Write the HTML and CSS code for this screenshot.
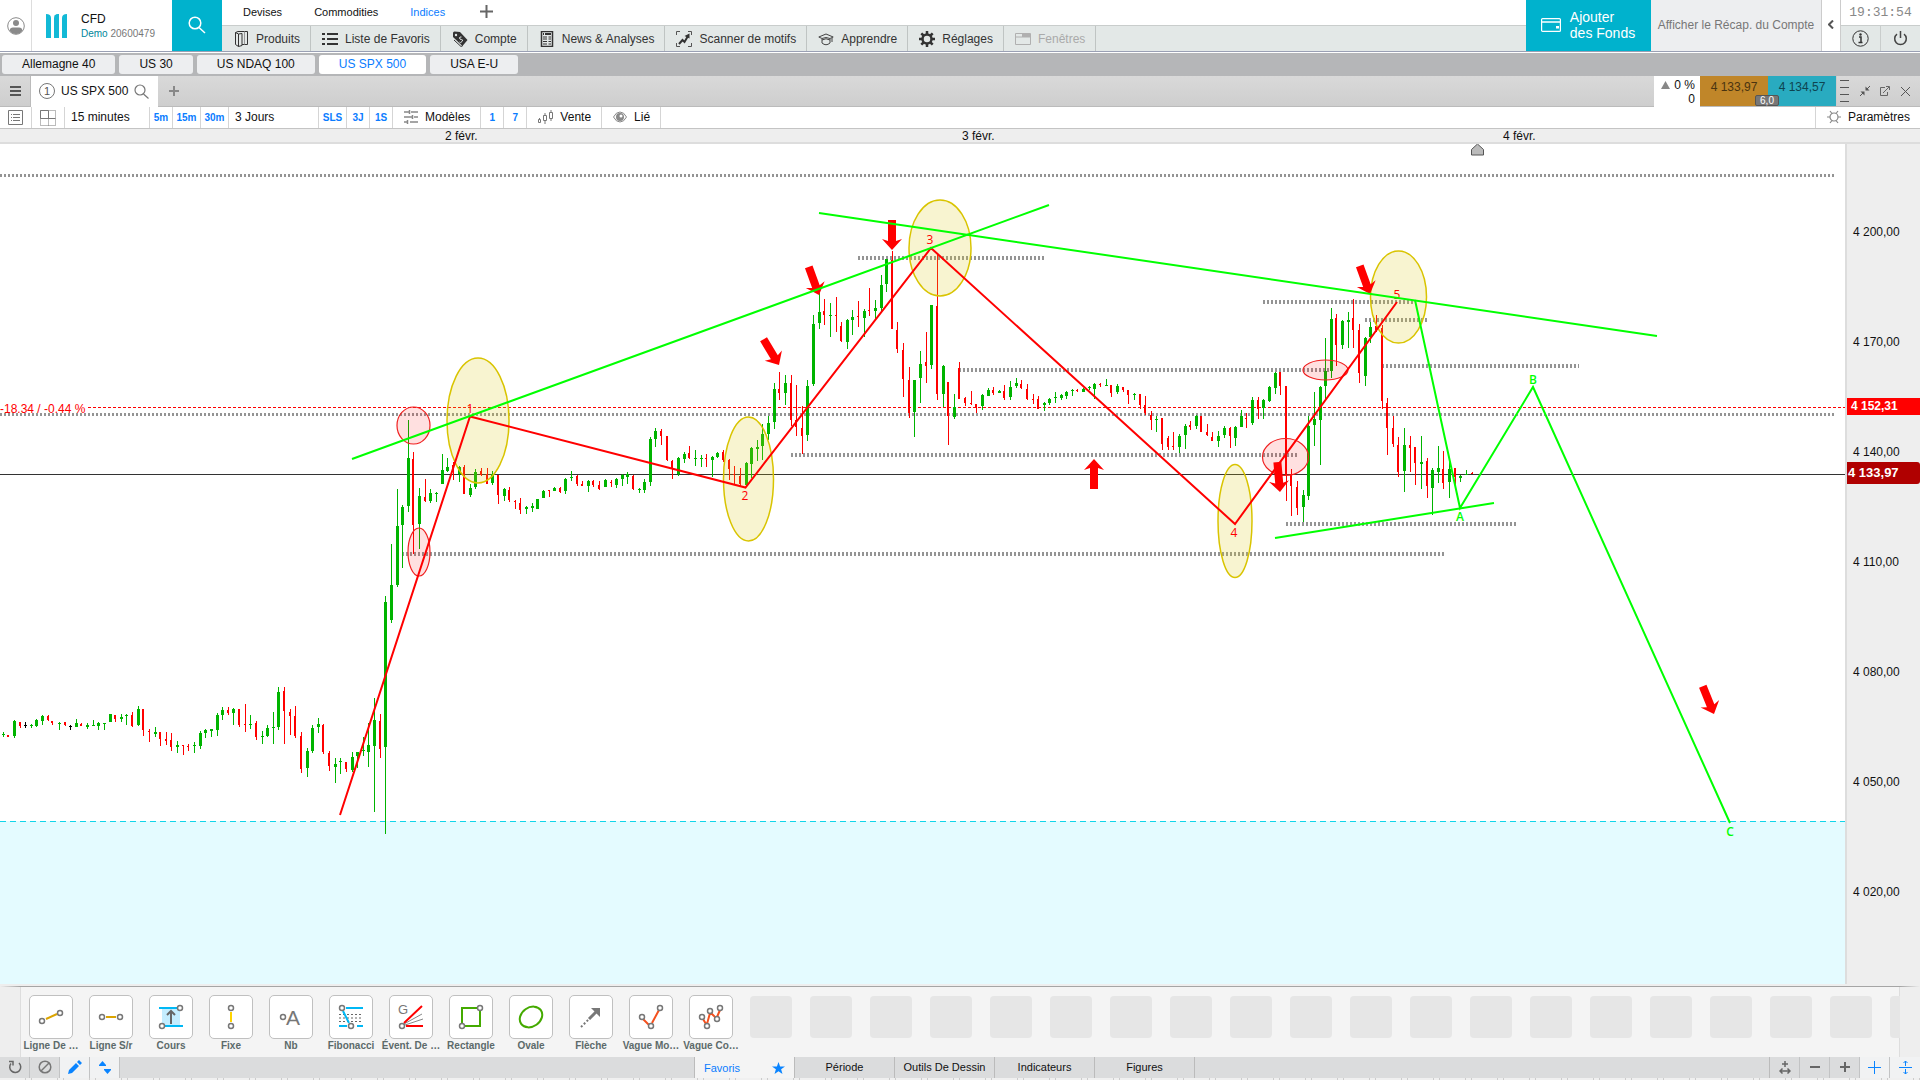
FILE: index.html
```html
<!DOCTYPE html>
<html lang="fr">
<head>
    <meta charset="UTF-8">
    <meta name="viewport" content="width=device-width, initial-scale=1.0">
    <title>US SPX 500 - CFD</title>
    <link rel="stylesheet" href="styles.css">
</head>
<body>

    <header class="header">
        <button class="user" aria-label="Profil">
            <svg width="18" height="22" viewBox="0 0 18 22"><circle cx="9" cy="11" r="8.3" fill="none" stroke="#8a8a8a"/><circle cx="9" cy="8" r="3" fill="#8a8a8a"/><path d="M2.5 15.500Q3 12.500 6 12.500h6q3 0 3.500 3Q13 19 9 19t-6.500-3.500z" fill="#8a8a8a"/></svg>
        </button>
        <div class="brand">
            <svg width="21" height="24" viewBox="0 0 21 24" fill="#12b9d6"><path d="M0 0Q5 0 5 4v20H0z"/><path d="M8 4q0-4 5-4v24H8z"/><path d="M16 4q0-4 5-4v24h-5z"/><path d="M8 2q2-2 5-2v3z"/></svg>
            <div class="account">
                <span class="account-name">CFD</span>
                <span class="account-id"><b>Demo</b> 20600479</span>
            </div>
        </div>
        <button class="search" aria-label="Rechercher">
            <svg width="18" height="18" viewBox="0 0 18 18" fill="none" stroke="#fff" stroke-width="1.500"><circle cx="7" cy="7" r="5.800"/><path d="M11 11.500l6 5.500"/></svg>
        </button>
        <div class="navs">
            <nav class="markets">
                <a href="#">Devises</a>
                <a href="#">Commodities</a>
                <a href="#" class="active">Indices</a>
                <button aria-label="Ajouter"><svg width="13" height="13" viewBox="0 0 13 13" stroke="#666" stroke-width="2"><path d="M6.500 0v13M0 6.500h13"/></svg></button>
            </nav>
            <nav class="menu">
                <button><svg class="ico" viewBox="0 0 16 16" fill="none" stroke="#333"><path d="M5 .5h9.500v13H9M2.500 1.500l3 1.500v12.500l-3-2zM5.500 3l3.500-.5v12l-3.500 1M5 .5L2.500 1.500"/><path d="M11.500.5v13" stroke="#999"/></svg>Produits</button>
                <button><svg class="ico" viewBox="0 0 16 16" stroke="#333" stroke-width="2"><path d="M0 3h3M0 8h3M0 13h3M5 3h11M5 8h11M5 13h11"/></svg>Liste de Favoris</button>
                <button><svg class="ico" viewBox="0 0 16 16"><path d="M1 2q0-1.500 1.500-1.500L8 1l7.500 8-5 6L1 6z" fill="#333"/><path d="M2 9l7 6.500 2-1" fill="none" stroke="#333"/><circle cx="4" cy="4" r="1.200" fill="#e3e8e7"/><path d="M9.500 6q-2-.5-2 1t2 1.500.5 2-2.500.5" fill="none" stroke="#e3e8e7"/></svg>Compte</button>
                <button><svg class="ico" viewBox="0 0 16 16" fill="none" stroke="#333"><rect x="2.500" y=".5" width="11" height="15" stroke-width="1.500"/><path d="M4 3h1M6 3h6" stroke-width="2"/><path d="M4 6h4M4 8h4M4 10.500h4M4 13h4M9.500 6H12M9.500 8H12M9.500 10.500H12M9.500 13H12"/></svg>News &amp; Analyses</button>
                <button><svg class="ico" viewBox="0 0 16 16" fill="none" stroke="#333"><path d="M.5 4V.5H4M12 .5h3.500V4M.5 12v3.500H4M12 15.500h3.500V12" stroke="#555"/><path d="M3 13l3.500-4 2 2L12 5" stroke-width="2"/><path d="M13.500 2.500v5L8.500 5z" fill="#333" stroke="none"/></svg>Scanner de motifs</button>
                <button><svg class="ico" viewBox="0 0 16 16" fill="none" stroke="#444"><path d="M.8 6L8 3l7.200 3L12 7.500Q8 5.500 4 7.500zM4 8v4q4 3.500 8 0V8M4 9q4-2.500 8 0M14 7v4"/></svg>Apprendre</button>
                <button><svg class="ico" viewBox="0 0 16 16" fill="none" stroke="#333"><circle cx="8" cy="8" r="4.500" stroke-width="2.500"/><path d="M8 0v3M8 13v3M0 8h3M13 8h3M2.300 2.300l2.200 2.200M11.500 11.500l2.200 2.200M2.300 13.700l2.200-2.200M11.500 4.500l2.200-2.200" stroke-width="2.500"/></svg>Réglages</button>
                <button disabled><svg class="ico" viewBox="0 0 16 16" fill="none" stroke="#b0b0b0"><path d="M.5 2.500h15v11H.5z"/><path d="M1 6h14"/><path d="M7 4.500h8" stroke-width="3"/></svg>Fenêtres</button>
            </nav>
        </div>
        <button class="funds">
            <svg width="20" height="14" viewBox="0 0 20 14" fill="none" stroke="#fff" stroke-width="1.200"><rect x=".6" y=".6" width="18.800" height="12.800" rx="1"/><path d="M1 4h18" stroke-width="1.500"/><rect x="15" y="8" width="3" height="2.500" fill="#fff" stroke="none"/></svg>
            <span>Ajouter<br>des Fonds</span>
        </button>
        <button class="summary">Afficher le Récap. du Compte</button>
        <button class="fold" aria-label="Replier"><svg width="6" height="9" viewBox="0 0 6 9" fill="none" stroke="#555" stroke-width="2"><path d="M5 .5l-4 4 4 4"/></svg></button>
        <div class="status">
            <time class="clock">19:31:54</time>
            <div class="status-buttons">
                <button aria-label="Informations"><svg width="17" height="17" viewBox="0 0 17 17"><circle cx="8.500" cy="8.500" r="7.700" fill="none" stroke="#333"/><path d="M7 7h2v5M6.500 12.500h4" stroke="#333" stroke-width="1.500" fill="none"/><circle cx="8.500" cy="4.500" r="1.200" fill="#333"/></svg></button>
                <button aria-label="Quitter"><svg width="15" height="15" viewBox="0 0 15 15" fill="none" stroke="#444" stroke-width="1.500"><path d="M4 3.200a5.800 5.800 0 1 0 7 0M7.500 0v7"/></svg></button>
            </div>
        </div>
    </header>

    <nav class="layouts">
        <button>Allemagne 40</button>
        <button>US 30</button>
        <button>US NDAQ 100</button>
        <button class="active">US SPX 500</button>
        <button>USA E-U</button>
    </nav>

    <div class="titlebar">
        <button class="burger" aria-label="Menu"><svg width="11" height="12" viewBox="0 0 11 12" stroke="#555" stroke-width="2"><path d="M0 2h11M0 6h11M0 10h11"/></svg></button>
        <div class="tab">
            <span class="num">1</span>
            <span>US SPX 500</span>
            <svg width="15" height="15" viewBox="0 0 15 15" fill="none" stroke="#777" stroke-width="1.200"><circle cx="6" cy="6" r="5"/><path d="M9.500 10l5 4.500"/></svg>
        </div>
        <button class="newtab" aria-label="Nouvel onglet"><svg width="10" height="10" viewBox="0 0 10 10" stroke="#888" stroke-width="2"><path d="M5 0v10M0 5h10"/></svg></button>
        <div class="change">
            <span><svg class="rise" width="9" height="8" viewBox="0 0 9 8"><path d="M4.500 0L9 8H0z" fill="#888"/></svg>0 %</span>
            <span>0</span>
        </div>
        <div class="quotes">
            <button class="sell">4 133,97</button>
            <button class="buy">4 134,57</button>
            <span class="spread">6,0</span>
        </div>
        <div class="window-tools">
            <svg width="9" height="23" viewBox="0 0 9 23" stroke="#555"><path d="M0 .5h9M0 7.500h9M0 14.500h9M0 21.500h9"/></svg>
            <button aria-label="Réduire"><svg width="10" height="10" viewBox="0 0 10 10" stroke="#555" fill="#555"><path d="M10 0L7 3M0 10l3-3" fill="none"/><path d="M5.500.5v4h4zM.5 5.500h4v4z" stroke="none"/></svg></button>
            <button aria-label="Détacher"><svg width="10" height="10" viewBox="0 0 10 10" stroke="#666" fill="none"><path d="M5 1.500H.5v8h7V6M3 7l6-6M6 .5h3.500V4"/></svg></button>
            <button aria-label="Fermer"><svg width="9" height="9" viewBox="0 0 9 9" stroke="#555"><path d="M0 0l9 9M9 0L0 9"/></svg></button>
        </div>
    </div>

    <div class="toolbar">
        <button class="cell list" aria-label="Liste"><svg width="15" height="15" viewBox="0 0 15 15" fill="none" stroke="#777"><path d="M.5.500h14v14H.5zM3 4.500h1M5 4.500h7M3 7.500h1M5 7.500h7M3 10.500h1M5 10.500h7"/></svg></button>
        <button class="cell grid" aria-label="Grille"><svg width="16" height="16" viewBox="0 0 16 16" fill="none" stroke="#777"><path d="M.5.500h15v15H.5z" stroke-dasharray="1 1"/><path d="M8.500 8.500v7" stroke-dasharray="1 1"/><path d="M.5 8.500v-8h8v8M.5 8.500h15"/></svg></button>
        <select class="cell interval" aria-label="Intervalle"><option>15 minutes</option></select>
        <button class="cell quick">5m</button>
        <button class="cell quick wide">15m</button>
        <button class="cell quick wide">30m</button>
        <select class="cell period" aria-label="Période"><option>3 Jours</option></select>
        <button class="cell quick wide">SLS</button>
        <button class="cell quick">3J</button>
        <button class="cell quick">1S</button>
        <button class="cell"><svg width="14" height="14" viewBox="0 0 14 14" stroke="#888" stroke-width="1.500"><path d="M0 2h5M7 2h7M5.500 0v4M0 7h8M10 7h4M8.500 5v4M0 12h3M6 12h8M3.500 10v4"/></svg>Modèles</button>
        <button class="cell quick">1</button>
        <button class="cell quick">7</button>
        <button class="cell"><svg width="15" height="14" viewBox="0 0 15 14" fill="none" stroke="#777"><path d="M.5 9.500h2v3h-2zM5.500 5.500h3v5h-3zM11.500 2.500h3v6h-3zM7 3v2M7 11v3M13 0v2M13 9v2M1.500 8v1"/></svg>Vente</button>
        <button class="cell"><svg width="14" height="12" viewBox="0 0 14 12"><path d="M.5 6Q3 1 7 1t6.500 5Q11 11 7 11T.5 6z" fill="#fff" stroke="#888"/><circle cx="7" cy="6" r="4" fill="#888"/><circle cx="8" cy="5" r="1.500" fill="#fff"/></svg>Lié</button>
        <button class="cell settings"><svg width="14" height="14" viewBox="0 0 14 14" fill="none" stroke="#888" stroke-width="1.200"><circle cx="7" cy="7" r="4"/><path d="M0 7h3M11 7h3M3 1l2 2.500M11 1L9 3.500M3 13l2-2.500M11 13l-2-2.500"/></svg>Paramètres</button>
    </div>

    <main class="chart">
        <div class="dates">
            <span class="date d1">2 févr.</span>
            <span class="date d2">3 févr.</span>
            <span class="date d3">4 févr.</span>
        </div>
        <div class="plot-row">
            <svg class="plot">
                <g transform="translate(0 -144)">
                    <rect class="zone" x="0" y="821" width="100%" height="100%"/>
                    <path class="zone-line" d="M0 821.500H3000"/>
                    <path class="price-line" d="M0 474.500H3000"/>
                    <g class="levels">
                        <path d="M0 175.500H1834M0 414.500H1834"/>
                        <path class="thick" d="M858 258H1044M959 370H1332M791 455H1297M402 554H1444M1263 302H1415M1365 320H1427M1382 366H1579M1286 524H1516"/>
                    </g>
                    <path class="prev-line" d="M88 407.500H3000"/>
                    <text class="prev-text" x="0" y="413">-18.34 / -0.44 %</text>
                    <g id="candles"></g>
                    <g class="ovals">
                        <ellipse cx="478" cy="420.500" rx="31" ry="62.500"/>
                        <ellipse cx="748.500" cy="479" rx="25" ry="62"/>
                        <ellipse cx="940" cy="248" rx="31" ry="48"/>
                        <ellipse cx="1235" cy="521" rx="17" ry="56.500"/>
                        <ellipse cx="1398.500" cy="297" rx="28" ry="46"/>
                    </g>
                    <g class="ovals red">
                        <ellipse cx="413.500" cy="425.500" rx="16.500" ry="18.500"/>
                        <ellipse cx="419" cy="552" rx="11" ry="24"/>
                        <ellipse cx="1325.500" cy="370" rx="22.500" ry="10"/>
                        <ellipse cx="1285.500" cy="457" rx="23" ry="18.500"/>
                    </g>
                    <polyline class="wave" points="340,815 470,416.500 745.500,487.500 931,248 1235,524 1397,302"/>
                    <g class="wave-text">
                        <text x="470" y="413">1</text>
                        <text x="745" y="500">2</text>
                        <text x="930" y="244">3</text>
                        <text x="1234" y="537">4</text>
                        <text x="1397" y="299">5</text>
                    </g>
                    <g class="arrows" id="arrows"></g>
                    <g class="trend">
                        <path d="M352 459L1049 205M819 213L1657 336M1275 538L1494 503"/>
                        <polyline points="1415,300 1460,508 1533,387 1730,823"/>
                    </g>
                    <g class="wave-text green">
                        <text x="1460" y="521">A</text>
                        <text x="1533" y="384">B</text>
                        <text x="1730" y="836">C</text>
                    </g>
                    <path d="M1471.500 149.500l6-5.500 6 5.500v5.500h-12z" fill="#bbb" stroke="#555"/>
                </g>
            </svg>
            <div class="axis">
                <span>4 200,00</span>
                <span>4 170,00</span>
                <span>4 140,00</span>
                <span>4 110,00</span>
                <span>4 080,00</span>
                <span>4 050,00</span>
                <span>4 020,00</span>
                <b class="tag prev">4 152,31</b>
                <b class="tag last">4 133,97</b>
            </div>
        </div>
    </main>

    <section class="tools" id="tools">
        <div class="tool"><button aria-label="Ligne de tendance"><svg viewBox="0 0 44 44"><path d="M17 24l11-5" stroke="#dba400" stroke-width="2"/><circle cx="13" cy="26" r="2.500"/><circle cx="31" cy="18" r="2.500"/></svg></button><span>Ligne De …</span></div>
        <div class="tool"><button aria-label="Ligne S/r"><svg viewBox="0 0 44 44"><path d="M17 22h10" stroke="#dba400" stroke-width="2"/><circle cx="13" cy="22" r="2.500"/><circle cx="31" cy="22" r="2.500"/></svg></button><span>Ligne S/r</span></div>
        <div class="tool"><button aria-label="Cours"><svg viewBox="0 0 44 44"><path d="M13 13h18v18H13z" fill="#c4edff"/><path d="M10 13h18M16 31h18" stroke="#00b8f5" stroke-width="2"/><path d="M22 29V16M18 20l4-4 4 4" stroke="#666" stroke-width="2" fill="none"/><circle cx="31" cy="13" r="2.500"/><circle cx="13" cy="31" r="2.500"/></svg></button><span>Cours</span></div>
        <div class="tool"><button aria-label="Fixe"><svg viewBox="0 0 44 44"><path d="M22 17v10" stroke="#ffd400" stroke-width="2"/><circle cx="22" cy="13" r="2.500"/><circle cx="22" cy="31" r="2.500"/></svg></button><span>Fixe</span></div>
        <div class="tool"><button aria-label="Nb"><svg viewBox="0 0 44 44"><circle cx="14" cy="22" r="2.500"/><text x="17" y="30" class="glyph-a">A</text></svg></button><span>Nb</span></div>
        <div class="tool"><button aria-label="Fibonacci"><svg viewBox="0 0 44 44"><path d="M10 19.500h24M10 23h24M10 26.500h24" stroke="#666" stroke-dasharray="2 2"/><path d="M17 13h17M10 31h8M28 31h6M14 16l6 12" stroke="#00b8f5" stroke-width="2"/><circle cx="13" cy="13" r="2.500"/><circle cx="22" cy="31" r="2.500"/></svg></button><span>Fibonacci</span></div>
        <div class="tool"><button aria-label="Éventail de Gann"><svg viewBox="0 0 44 44"><text x="9" y="19" class="glyph-g">G</text><path d="M15 29l18-10M16 30l18-6" stroke="#888"/><path d="M15 28l18-17M17 31h17" stroke="#f00" stroke-width="2"/><circle cx="13" cy="31" r="2.500"/></svg></button><span>Évent. De …</span></div>
        <div class="tool"><button aria-label="Rectangle"><svg viewBox="0 0 44 44"><path d="M28 13H13v15M31 16v15H16" fill="none" stroke="#4a0" stroke-width="2"/><circle cx="31" cy="13" r="2.500"/><circle cx="13" cy="31" r="2.500"/></svg></button><span>Rectangle</span></div>
        <div class="tool"><button aria-label="Ovale"><svg viewBox="0 0 44 44"><ellipse cx="22" cy="22" rx="12" ry="9.500" transform="rotate(-35 22 22)" fill="none" stroke="#4a0" stroke-width="2"/></svg></button><span>Ovale</span></div>
        <div class="tool"><button aria-label="Flèche"><svg viewBox="0 0 44 44"><path d="M12 32l9-9" stroke="#777" stroke-width="2" stroke-dasharray="2 2"/><path d="M20 24l8-8" stroke="#777" stroke-width="3"/><path d="M22 13h9v9z" fill="#777"/></svg></button><span>Flèche</span></div>
        <div class="tool"><button aria-label="Vague Motrice"><svg viewBox="0 0 44 44"><path d="M14 24l6 6M23 28l7-13" stroke="#f4511e" stroke-width="2"/><circle cx="13" cy="22" r="2.500"/><circle cx="22" cy="31" r="2.500"/><circle cx="31" cy="13" r="2.500"/></svg></button><span>Vague Mo…</span></div>
        <div class="tool"><button aria-label="Vague Corrective"><svg viewBox="0 0 44 44"><path d="M14 24l3 5M18 29l3-11M22 18l5 5M28 22l3-7" stroke="#f4511e" stroke-width="2"/><circle cx="13" cy="22" r="2.500"/><circle cx="18" cy="31" r="2.500"/><circle cx="21" cy="16" r="2.500"/><circle cx="28" cy="24" r="2.500"/><circle cx="31" cy="13" r="2.500"/></svg></button><span>Vague Co…</span></div>
    </section>

    <footer class="footer">
        <button class="sq" aria-label="Recharger"><svg width="14" height="14" viewBox="0 0 14 14" fill="none" stroke="#666" stroke-width="1.500"><path d="M3 3.500a5.500 5.500 0 1 0 8-.5M1 1.500h4v4"/></svg></button>
        <button class="sq" aria-label="Effacer"><svg width="14" height="14" viewBox="0 0 14 14" fill="none" stroke="#777" stroke-width="1.500"><circle cx="7" cy="7" r="5.800"/><path d="M3 11l8-8"/></svg></button>
        <button class="sq on" aria-label="Dessiner"><svg width="14" height="14" viewBox="0 0 14 14" fill="#0a84ff"><path d="M0 14l1-4 7-7 3 3-7 7zM9 2l2-2 3 3-2 2z"/></svg></button>
        <button class="sq on" aria-label="Ordres"><svg width="12" height="13" viewBox="0 0 12 13" fill="#0a84ff"><path d="M0 4l3.500-4L7 4v1H0zM5 8h7v1l-3.500 4L5 9z"/></svg></button>
        <div class="footer-tabs">
            <button class="active">Favoris<svg width="13" height="12" viewBox="0 0 13 12" fill="#0a84ff"><path d="M6.500 0l1.600 4.500H13L9.100 7.300 10.500 12l-4-2.800-4 2.800 1.400-4.700L0 4.500h4.900z"/></svg></button>
            <button>Période</button>
            <button>Outils De Dessin</button>
            <button>Indicateurs</button>
            <button>Figures</button>
        </div>
        <div class="zoom">
            <button class="sq" aria-label="Ajuster"><svg width="12" height="14" viewBox="0 0 12 14" fill="none" stroke="#666" stroke-width="1.500"><path d="M6 1v6M3 4h6M1 11h10M3.500 8.500L1 11l2.500 2.500M8.500 8.500L11 11l-2.500 2.500"/></svg></button>
            <button class="sq" aria-label="Dézoomer"><svg width="10" height="10" viewBox="0 0 10 10" stroke="#666" stroke-width="2"><path d="M0 5h10"/></svg></button>
            <button class="sq" aria-label="Zoomer"><svg width="10" height="10" viewBox="0 0 10 10" stroke="#666" stroke-width="2"><path d="M0 5h10M5 0v10"/></svg></button>
            <button class="sq on" aria-label="Réticule"><svg width="13" height="13" viewBox="0 0 13 13" stroke="#0a84ff"><path d="M0 6.500h13M6.500 0v13"/></svg></button>
            <button class="sq on" aria-label="Échelle"><svg width="13" height="13" viewBox="0 0 13 13" stroke="#0a84ff" fill="none"><path d="M0 6.500h13M6.500 0v5M6.500 8v5M4.500 2l2-2 2 2M4.500 11l2 2 2-2"/></svg></button>
        </div>
    </footer>
    <div class="ruler"></div>

    <script src="script.js"></script>
</body>
</html>
```

FILE: styles.css
```css
* {
    box-sizing: border-box;
}
body {
    margin: 0;
    height: 100vh;
    display: flex;
    flex-direction: column;
    overflow: hidden;
    background: #eee;
    font-family: "Liberation Sans", Arial, sans-serif;
    font-size: 12px;
    line-height: 16px;
    color: #111;
}
button, select {
    font: inherit;
    color: inherit;
    background: none;
    border: 0;
    padding: 0;
    margin: 0;
    display: flex;
    align-items: center;
    justify-content: center;
    white-space: nowrap;
    cursor: pointer;
}
svg {
    flex: none;
}

/* header */
.header {
    display: flex;
    height: 53px;
    flex: none;
    background: #fff;
    border-bottom: 1px solid #fff;
    box-shadow: inset 0 -1px #9aa0b4;
    padding-bottom: 1px;
}
.user {
    width: 32px;
    border-right: 1px solid #ddd;
}
.brand {
    display: flex;
    align-items: center;
    width: 140px;
    padding-left: 14px;
    gap: 14px;
}
.account {
    display: flex;
    flex-direction: column;
}
.account-id {
    font-size: 10px;
    color: #777;
    line-height: 14px;
}
.account-id b {
    font-weight: normal;
    color: #00869b;
}
.search {
    width: 50px;
    background: #00b2cd;
    padding-bottom: 2px;
}
.navs {
    flex: 1;
    display: flex;
    flex-direction: column;
}
.markets {
    display: flex;
    align-items: center;
    height: 25px;
    padding: 0 0 2px 21px;
    gap: 32px;
    font-size: 11px;
}
.markets a {
    color: #111;
    text-decoration: none;
}
.markets a.active {
    color: #0a7cff;
}
.markets button {
    margin-left: 3px;
}
.menu {
    flex: 1;
    display: flex;
    background: #e3e8e7;
    border-top: 1px solid #c9cdcc;
    color: #333;
}
.menu button {
    padding: 0 10px 0 11px;
    gap: 7px;
    border-right: 1px solid #bfc4c3;
}
.menu button:disabled {
    color: #aaa;
}
.ico {
    width: 16px;
    height: 16px;
}
.funds {
    width: 125px;
    gap: 9px;
    padding: 0 1px 2px 0;
    background: #00b2cd;
    color: #fff;
    font-size: 14px;
    text-align: left;
}
.summary {
    width: 171px;
    background: #edeef0;
    border-right: 1px solid #ccc;
    color: #777;
    padding-bottom: 2px;
}
.fold {
    width: 19px;
    border-right: 1px solid #ccc;
    padding-bottom: 3px;
}
.status {
    width: 79px;
    display: flex;
    flex-direction: column;
}
.clock {
    height: 25px;
    line-height: 26px;
    text-align: center;
    font-family: "Liberation Mono", monospace;
    font-size: 13px;
    color: #888;
}
.status-buttons {
    flex: 1;
    display: flex;
    border-top: 1px solid #c9cdcc;
    background: #e3e8e7;
}
.status-buttons button {
    flex: 1;
}
.status-buttons button:first-child {
    border-right: 1px solid #c9cdcc;
}

/* saved layouts */
.layouts {
    display: flex;
    align-items: center;
    gap: 4px;
    height: 23px;
    flex: none;
    padding-left: 2px;
    padding-bottom: 1px;
    background: #b5b6b8;
}
.layouts button {
    height: 19px;
    padding: 0 20px;
    border-radius: 3px;
    background: #edeef0;
}
.layouts button.active {
    background: #fff;
    color: #0a7cff;
}

/* chart title bar */
.titlebar {
    display: flex;
    height: 31px;
    flex: none;
    background: linear-gradient(#d9d9d9, #cecece);
    border-bottom: 1px solid #bbb;
}
.burger {
    width: 31px;
    border-right: 1px solid #bbb;
}
.tab {
    display: flex;
    align-items: center;
    gap: 6px;
    height: 31px;
    padding: 0 9px 1px 8px;
    background: #fff;
}
.num {
    width: 16px;
    height: 16px;
    border: 1px solid #777;
    border-radius: 50%;
    font-size: 11px;
    line-height: 14px;
    text-align: center;
    color: #555;
}
.newtab {
    width: 32px;
}
.change {
    margin-left: auto;
    width: 46px;
    height: 31px;
    padding: 2px 5px 0 0;
    display: flex;
    flex-direction: column;
    background: #fff;
    text-align: right;
    line-height: 14px;
}
.rise {
    margin-right: 4px;
}
.quotes {
    position: relative;
    display: flex;
}
.quotes button {
    width: 68px;
    padding-bottom: 9px;
    background: #c08629;
    color: #4a3410;
}
.quotes .buy {
    background: #29abc0;
    color: #0e4450;
}
.spread {
    position: absolute;
    left: 55px;
    bottom: 0;
    width: 24px;
    border: 1px solid #555;
    border-radius: 2px;
    background: #777;
    color: #fff;
    font-size: 10px;
    line-height: 9px;
    text-align: center;
}
.window-tools {
    width: 84px;
    display: flex;
    align-items: center;
    justify-content: space-between;
    padding: 0 10px 0 3px;
    border-left: 1px solid #ccc;
}

/* toolbar */
.toolbar {
    display: flex;
    height: 22px;
    flex: none;
    background: #fff;
    border-bottom: 1px solid #c4c4c4;
}
.cell {
    border-right: 1px solid #d5d5d5;
    padding: 0 10px 0 11px;
    gap: 7px;
    padding-bottom: 2px;
}
.cell.list {
    width: 32px;
    padding: 0 6px;
}
.cell.grid {
    width: 33px;
    padding: 0;
}
select.cell {
    appearance: none;
    padding-left: 6px;
    border-radius: 0;
}
.cell.interval {
    width: 85px;
}
.cell.period {
    width: 90px;
}
.cell.quick {
    width: 23px;
    padding: 0;
    font-size: 10px;
    font-weight: bold;
    color: #0a7cff;
}
.cell.quick.wide {
    width: 28px;
}
.cell.settings {
    margin-left: auto;
    border-right: 0;
    border-left: 1px solid #d5d5d5;
}

/* chart */
.chart {
    flex: 1;
    min-height: 0;
    display: flex;
    flex-direction: column;
}
.dates {
    position: relative;
    height: 15px;
    flex: none;
    background: #eee;
    border-bottom: 2px solid #ddd;
    line-height: 14px;
}
.date {
    position: absolute;
    top: 0;
}
.d1 {
    left: 445px;
}
.d2 {
    left: 962px;
}
.d3 {
    left: 1503px;
}
.plot-row {
    flex: 1;
    min-height: 0;
    display: flex;
}
.plot {
    flex: 1;
    min-width: 0;
    height: 100%;
    background: #fff;
}
.zone {
    fill: #e4fbff;
}
.zone-line {
    stroke: #10d5ea;
    stroke-dasharray: 6 4;
}
.price-line {
    stroke: #333;
}
.levels {
    stroke: #949494;
    stroke-width: 3;
    stroke-dasharray: 2 2;
}
.thick {
    stroke-width: 4;
}
.prev-line {
    stroke: #f00;
    stroke-dasharray: 3 2;
}
.prev-text {
    fill: #f00;
}
.up {
    fill: #00b400;
}
.down {
    fill: #f00;
}
.flat {
    fill: #000;
}
.ovals {
    fill: rgba(218, 198, 20, 0.2);
    stroke: #d9c400;
    stroke-width: 1.5;
}
.ovals.red {
    fill: rgba(255, 0, 0, 0.12);
    stroke: #f02020;
    stroke-width: 1.2;
}
.wave, .trend {
    fill: none;
    stroke: #f00;
    stroke-width: 2;
}
.trend {
    stroke: #0f0;
}
.arrows {
    fill: #f00;
}
.wave-text {
    fill: #f00;
    font-family: "Open Sans", sans-serif;
    text-anchor: middle;
}
.wave-text.green {
    fill: #0f0;
    font-weight: 600;
}
.axis {
    position: relative;
    width: 75px;
    padding: 33px 0 0 6px;
    border-left: 2px solid #ddd;
    background: #eee;
    overflow: hidden;
}
.axis span {
    display: block;
    height: 110px;
    line-height: 110px;
    white-space: nowrap;
}
.tag {
    position: absolute;
    left: -2px;
    right: 0;
    color: #fff;
}
.prev {
    top: 254px;
    padding-left: 6px;
    line-height: 17px;
    background: #f00;
}
.last {
    top: 318px;
    padding-left: 3px;
    border-radius: 3px;
    font-size: 13px;
    line-height: 22px;
    background: #b00000;
}

/* drawing tools */
.tools {
    display: flex;
    height: 71px;
    flex: none;
    margin-top: 2px;
    padding: 8px 0 0 1px;
    border-top: 1px solid #a5a5a5;
    border-left: 20px solid #eee;
    border-right: 20px solid #eee;
    background: #f4f4f4;
    box-shadow: inset 1px 0 #ddd, inset -1px 0 #ddd;
    overflow: hidden;
}
.tool {
    width: 60px;
    flex: none;
    display: flex;
    flex-direction: column;
    align-items: center;
    font-size: 10px;
    font-weight: bold;
    line-height: 14px;
    color: #5c6a6a;
    white-space: nowrap;
}
.tool button {
    width: 44px;
    height: 44px;
    border: 1px solid #c0c0c0;
    border-radius: 5px;
    background: #fff;
}
.tool svg {
    width: 44px;
    height: 44px;
}
.tool circle {
    fill: #fff;
    stroke: #777;
    stroke-width: 1.5;
}
.tool text {
    fill: #777;
    font-weight: normal;
}
.glyph-a {
    font-size: 21px;
}
.glyph-g {
    font-size: 13px;
}
.slot {
    width: 42px;
    height: 42px;
    margin: 1px 9px 0;
    flex: none;
    border-radius: 4px;
    background: #e6e6e6;
}

/* footer */
.footer {
    display: flex;
    height: 21px;
    flex: none;
    background: #dbdcdd;
}
.footer button {
    padding-bottom: 1px;
}
.sq {
    width: 30px;
    border-right: 1px solid #c2c3c4;
}
.sq.on {
    background: #f1f2f3;
}
.footer-tabs {
    display: flex;
    margin-left: 574px;
    border-left: 1px solid #bbb;
    font-size: 11px;
}
.footer-tabs button {
    width: 100px;
    border-right: 1px solid #bbb;
}
.footer-tabs .active {
    justify-content: space-between;
    padding: 0 9px;
    background: #f4f4f4;
    color: #0a7cff;
}
.zoom {
    display: flex;
    margin-left: auto;
    border-left: 1px solid #bbb;
}
.zoom .sq:last-child {
    border-right: 0;
}
.ruler {
    height: 2px;
    flex: none;
    background: repeating-linear-gradient(90deg, #f0f0f0 0 25px, #ccc 25px 26px, #f0f0f0 26px 31px, #ccc 31px 32px);
}
```

FILE: script.js
```js
const SVG_NS = 'http://www.w3.org/2000/svg';

// candles: x high top bottom low, three units per pixel, from each block's origin
const blocks = [
    { x: 0, y: 640, rows: `
10 g 276 282 285 291|24 r 285 285 291 291|43 g 240 243 288 294|60 r 246 246 258 264|76 k 246 255 258 264
94 g 252 255 258 264|110 g 237 240 258 261|127 g 225 228 243 255|144 r 225 228 240 243|158 r 243 243 249 255
178 g 246 249 252 270|195 r 246 246 255 258|211 k 255 258 261 270|229 g 237 249 261 261|243 r 249 251 258 258
262 g 249 255 261 267|280 g 240 255 258 258|295 g 246 249 258 270|313 g 249 249 252 270|331 g 222 222 246 246
345 r 225 225 237 246|364 g 222 231 237 246|379 g 222 225 228 255|397 r 216 225 258 261|415 g 198 207 255 258
430 r 207 207 270 288|448 r 267 273 276 306|466 g 261 276 282 291|481 r 276 276 297 318|498 r 276 297 303 315
514 r 279 300 321 333|532 g 303 315 321 339|550 r 315 315 318 345|565 r 312 318 321 333|583 g 306 315 318 339
601 g 273 279 318 327|616 g 267 270 279 294|634 g 267 267 273 291|652 g 219 225 270 288|667 g 201 210 225 240
685 r 201 210 219 225|700 g 204 207 219 255|718 r 207 207 255 261|736 r 192 252 255 276|751 g 225 252 255 267
769 r 243 249 291 300|787 g 273 288 291 312|802 g 255 264 288 291|820 g 216 261 264 312|835 g 141 156 261 270
853 r 141 153 213 312|871 r 207 216 228 285|886 r 198 228 288 294|904 r 276 288 387 399|922 g 324 333 384 411
937 g 255 264 333 339|955 g 234 252 261 279|969 r 252 255 336 342|988 r 333 339 378 393|1006 g 354 372 381 429
1021 g 354 363 366 402|1039 r 366 366 387 396|1057 g 336 351 390 396|1072 g 336 336 348 384|1090 g 291 330 333 348
1105 g 249 315 336 381|1123 g 174 240 318 516|1141 r 222 243 327 354|1156 g -132 -114 321 582` },
    { x: 330, y: 340, rows: `
184 g 612 735 840 850|202 g 447 558 735 741|217 g 495 501 555 684|235 g 240 354 498 516|249 r 336 357 555 642
268 g 444 468 552 627|286 r 417 471 483 486|301 g 447 459 483 489|319 g 456 459 462 486|337 g 342 390 432 432
352 g 354 381 393 396|370 r 366 375 396 420|388 g 378 381 402 426|403 r 375 381 462 462|421 g 432 444 465 471
436 g 387 396 441 447|453 r 384 393 405 408|472 r 384 402 432 432|487 g 393 402 429 435|505 r 405 405 465 492
523 g 444 447 468 483|538 r 441 450 480 486|556 r 480 483 486 507|571 r 474 489 510 522|589 g 498 501 507 522
607 g 489 498 504 516|622 g 477 477 507 507|640 g 450 453 474 474|657 r 450 450 453 471|673 g 441 444 453 453
691 r 441 444 456 459|706 g 414 417 453 462|724 g 393 411 414 423|741 r 405 408 432 438|757 r 423 432 438 438
775 g 420 423 438 456|790 r 420 423 435 441|808 r 423 435 447 450|826 g 417 420 441 441|843 r 420 426 429 441
859 g 414 417 435 444|877 g 402 405 417 438|892 g 396 402 411 432|909 r 405 408 447 450|928 g 444 447 450 459
943 g 417 426 450 459|961 g 291 297 426 438|976 g 264 273 297 321|994 r 267 273 288 315|1011 r 288 288 360 363
1027 r 360 363 387 417|1045 g 351 354 402 408|1063 g 336 342 357 369|1078 r 318 339 354 357|1096 g 330 354 357 378
1114 g 345 354 357 381|1129 r 342 354 357 381|1147 g 348 351 360 411|1162 g 336 339 351 354|1180 r 330 336 360 366
1197 r 357 360 387 420|1213 r 378 402 405 432|1231 r 384 408 432 438|1249 g 366 369 435 438|1264 g 321 324 372 414
1282 g 300 321 327 363|1297 g 252 282 318 360|1315 g 228 249 282 300|1333 g 129 147 246 267|1348 r 96 147 159 180
1366 g 105 129 159 195|1384 r 105 129 240 258|1399 r 135 240 261 288|1417 r 198 264 288 342` },
    { x: 740, y: 190, rows: `
202 g 570 588 735 753|220 g 375 402 582 588|238 g 309 366 399 417|253 r 327 363 375 405|271 g 339 375 378 441
289 r 321 375 378 426|304 r 396 408 453 456|322 g 387 390 456 477|337 g 360 381 390 435|355 r 333 378 381 411
373 g 357 363 384 441|388 r 294 360 363 378|406 g 330 354 363 387|424 g 255 285 354 363|439 g 207 207 282 306
456 r 183 210 417 417|472 r 396 420 477 489|490 r 459 480 567 621|508 r 531 570 669 684|523 g 570 570 666 741
541 g 483 522 564 639|559 r 426 516 528 579|574 g 345 345 525 537|592 r 195 348 612 630|610 g 525 528 612 651
625 r 576 576 678 765|643 g 612 651 681 687|658 r 516 534 627 627|676 r 621 624 639 648|694 r 603 639 642 645
709 r 642 642 651 669|727 g 612 615 648 660|745 g 594 600 618 618|760 r 591 600 609 615|778 g 600 603 609 609
793 r 585 603 624 630|811 g 573 591 621 630|829 g 564 579 588 594|844 r 570 582 594 597|862 r 582 597 627 630
880 r 612 627 630 642|896 r 618 627 657 657|913 g 636 639 645 663|928 g 624 627 639 645|946 g 606 621 624 639
964 g 612 615 624 630|979 g 603 606 618 627|997 g 597 600 603 618|1013 r 597 600 603 606|1030 g 594 597 606 606
1048 g 588 591 594 600|1063 g 579 582 597 627|1080 r 579 582 585 591|1099 g 567 585 588 588|1114 r 585 585 609 621
1132 g 582 588 606 612|1149 r 591 591 600 606|1165 r 600 600 615 642` },
    { x: 1100, y: 350, rows: `
103 g 129 132 135 150|120 r 132 132 165 177|136 r 138 165 189 195|154 r 183 195 210 240|169 g 198 207 210 246
187 r 204 204 282 300|205 r 258 264 291 300|220 r 246 288 291 300|238 g 252 258 291 309|256 g 222 228 255 297
270 r 213 225 231 240|289 g 195 198 228 237|303 r 198 198 246 246|321 r 222 246 255 258|338 r 246 261 273 273
355 g 243 258 273 291|373 g 228 234 255 264|391 r 231 234 258 294|406 g 228 231 264 288|424 g 180 198 231 231
439 r 189 204 207 234|457 g 141 150 219 225|475 r 141 150 177 207|490 g 147 150 174 207|508 g 108 111 153 156
526 g 66 69 114 132|541 r 66 66 108 135|558 r 108 108 375 453|574 r 357 372 408 498|592 r 393 411 474 495
610 g 420 435 471 516|625 g 198 228 438 450|643 g 126 207 225 288|661 g 108 111 210 345` },
    { x: 1250, y: 230, rows: `
226 g 324 423 468 507|244 g 234 267 423 444|259 r 252 264 345 408|277 g 270 273 345 357|295 g 246 270 276 354
310 r 207 264 300 354|327 r 282 300 429 459|346 g 321 324 438 468|361 g 276 291 321 339|379 r 255 288 300 306
396 r 285 294 513 537|411 r 504 519 594 675|430 r 558 594 642 651|445 r 621 645 726 741|463 g 594 645 723 786
481 r 618 645 654 726|495 r 651 651 699 765|514 g 618 696 702 777|532 r 684 693 768 804|547 g 714 720 774 855
565 g 648 714 726 759|580 r 663 717 759 777|598 g 696 717 756 804|615 r 714 714 741 768|631 g 735 738 744 756
649 g 720 732 733 733|667 r 726 729 732 732` }
];

const kinds = { g: 'up', r: 'down', k: 'flat' };

function addRect(parent, cls, x, y, w, h) {
    const rect = document.createElementNS(SVG_NS, 'rect');
    rect.setAttribute('class', cls);
    rect.setAttribute('x', x);
    rect.setAttribute('y', y);
    rect.setAttribute('width', w);
    rect.setAttribute('height', Math.max(h, 1));
    parent.appendChild(rect);
}

function drawCandles() {
    const layer = document.getElementById('candles');
    blocks.forEach(block => {
        block.rows.trim().split(/[|\n]/).forEach(row => {
            const [x, kind, high, top, bottom, low] = row.split(' ');
            const px = block.x + Math.floor(x / 3);
            const y = v => block.y + Math.round(v / 3);
            const cls = kinds[kind];
            addRect(layer, cls, px, y(high), 1, y(low) - y(high));
            addRect(layer, cls, px - 1, y(top), kind === 'r' ? 2 : 3, y(bottom) - y(top));
        });
    });
}

function drawArrows() {
    // tip x, tip y, rotation
    const arrows = [
        [779, 365, -31], [819, 295, -20], [892, 250, 0], [1094, 459, 180],
        [1370, 294, -20], [1280, 492, -5], [1714, 714, -22]
    ];
    const layer = document.getElementById('arrows');
    arrows.forEach(([x, y, angle]) => {
        const arrow = document.createElementNS(SVG_NS, 'path');
        arrow.setAttribute('d', 'M-4 -30h8v21l6 -2L0 0L-10 -11l6 2z');
        arrow.setAttribute('transform', `translate(${x} ${y}) rotate(${angle})`);
        layer.appendChild(arrow);
    });
}

function fillSlots() {
    const tools = document.getElementById('tools');
    for (let i = 0; i < 20; i++) {
        const slot = document.createElement('div');
        slot.className = 'slot';
        tools.appendChild(slot);
    }
}

drawCandles();
drawArrows();
fillSlots();
```
